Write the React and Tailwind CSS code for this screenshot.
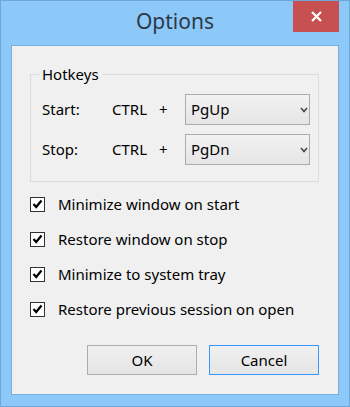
import { useState } from 'react';

const font = { fontFamily: '"Noto Sans", "Open Sans", sans-serif' };

function Dropdown({ value }) {
  return (
    <div className="relative w-[125px] h-[31px] border border-[#acacac] bg-gradient-to-b from-[#f2f2f2] to-[#e5e5e5] flex items-center pl-[5px] text-[15px] text-black">
      {value}
      <svg className="absolute right-[1px] top-[12px]" width="8" height="6" viewBox="0 0 8 6">
        <path d="M1 1 L4 4.5 L7 1" fill="none" stroke="#444" strokeWidth="1.6" />
      </svg>
    </div>
  );
}

function Check({ label, checked, onToggle }) {
  return (
    <div className="flex items-center h-[20px] cursor-default" onClick={onToggle}>
      <div className="w-[15px] h-[15px] border border-[#333] bg-white flex items-center justify-center">
        {checked && (
          <svg width="11" height="10" viewBox="0 0 11 10">
            <path d="M1.5 5 L4.2 8 L9.5 1.5" fill="none" stroke="#000" strokeWidth="2.2" />
          </svg>
        )}
      </div>
      <span className="ml-[13px] text-[15px] text-black">{label}</span>
    </div>
  );
}

function HotkeyRow({ label, value }) {
  return (
    <div className="flex items-center">
      <span className="w-[70px] pl-[11px] box-content">{label}</span>
      <span className="w-[73px] flex">
        <span>CTRL</span>
        <span className="ml-[12px]">+</span>
      </span>
      <Dropdown value={value} />
    </div>
  );
}

export default function App() {
  const [opts, setOpts] = useState([
    { label: 'Minimize window on start', on: true },
    { label: 'Restore window on stop', on: true },
    { label: 'Minimize to system tray', on: true },
    { label: 'Restore previous session on open', on: true },
  ]);

  const toggle = (i) =>
    setOpts(opts.map((o, j) => (j === i ? { ...o, on: !o.on } : o)));

  return (
    <div className="w-[350px] h-[407px] bg-[#8cc8f8] border border-[#6fa6d8] flex flex-col overflow-hidden" style={font}>
      {/* Title bar */}
      <div className="relative h-[44px] flex items-center justify-center shrink-0">
        <span className="text-[21px] text-[#2c3a48] -mt-[2px]">Options</span>
        <div className="absolute top-0 right-[10px] w-[46px] h-[31px] bg-[#c75050] flex items-center justify-center">
          <svg width="11" height="11" viewBox="0 0 11 11">
            <path d="M1 1 L10 10 M10 1 L1 10" stroke="#fff" strokeWidth="2.2" />
          </svg>
        </div>
      </div>

      {/* Client area */}
      <div className="ml-[10px] w-[328px] h-[350px] border border-[#79b0e0] bg-[#f0f0f0] shrink-0">
        <fieldset className="ml-[18px] mt-[18px] w-[289px] border border-[#dcdcdc] pb-[16px]">
          <legend className="ml-[8px] px-[3px] text-[15px] leading-[20px] text-black">Hotkeys</legend>
          <div className="flex flex-col gap-[9px] mt-[10px] text-[15px] text-black">
            <HotkeyRow label="Start:" value="PgUp" />
            <HotkeyRow label="Stop:" value="PgDn" />
          </div>
        </fieldset>

        <div className="ml-[18px] mt-[12px] flex flex-col gap-[15px]">
          {opts.map((o, i) => (
            <Check key={o.label} label={o.label} checked={o.on} onToggle={() => toggle(i)} />
          ))}
        </div>

        <div className="flex justify-end gap-[12px] pr-[19px] mt-[26px]">
          <button className="w-[110px] h-[30px] border border-[#adadad] bg-gradient-to-b from-[#f0f0f0] to-[#e5e5e5] text-[15px] text-black">
            OK
          </button>
          <button className="w-[110px] h-[30px] border border-[#3399ff] bg-gradient-to-b from-[#f0f0f0] to-[#e5e5e5] text-[15px] text-black">
            Cancel
          </button>
        </div>
      </div>
    </div>
  );
}
